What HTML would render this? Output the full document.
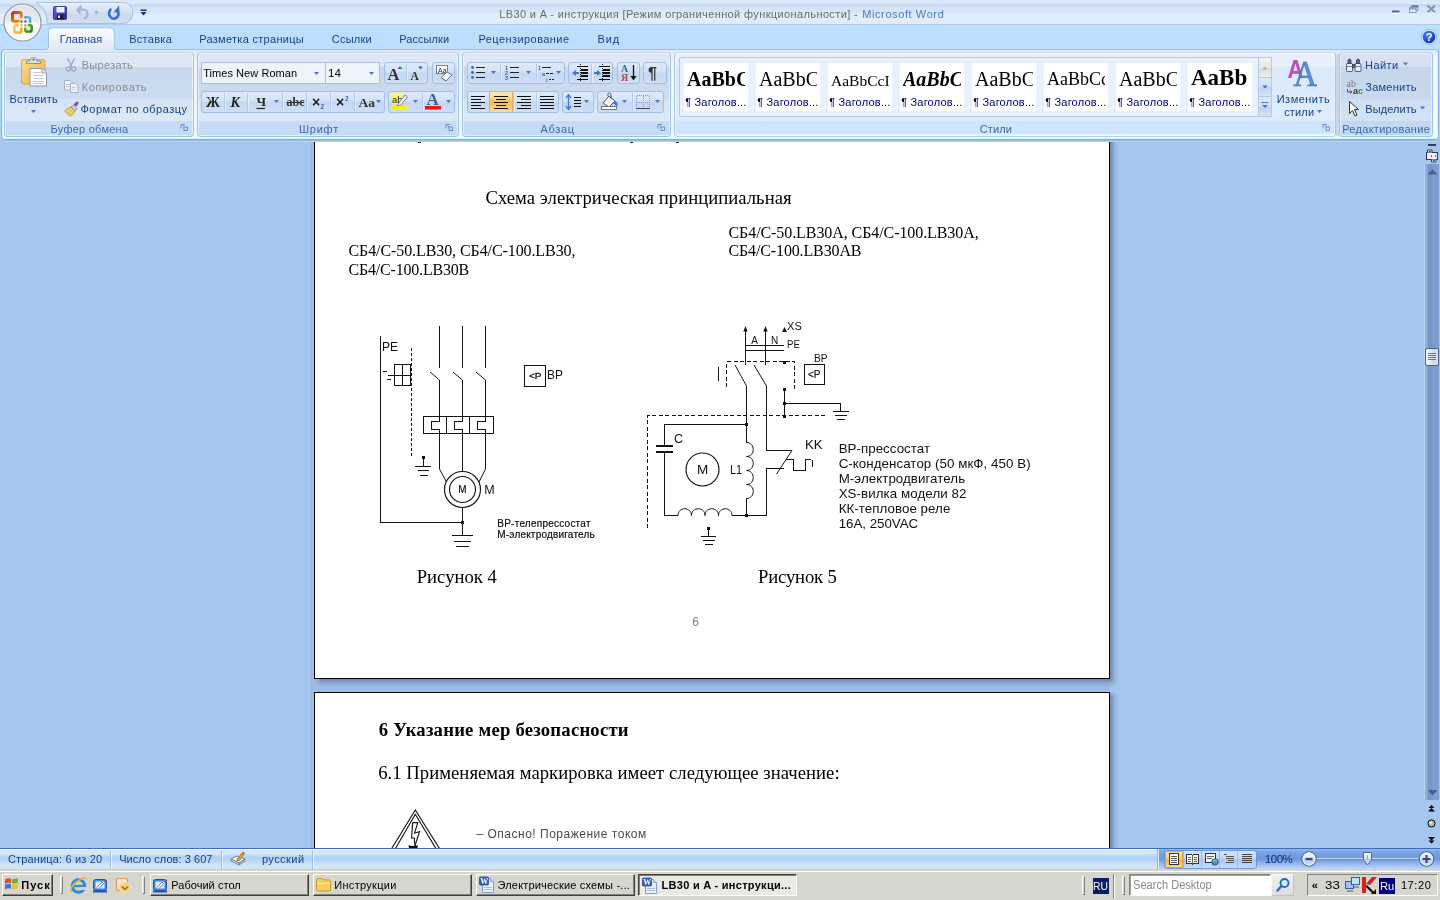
<!DOCTYPE html>
<html lang="ru"><head><meta charset="utf-8"><title>LB30 и A - инструкция - Microsoft Word</title>
<style>
html,body{margin:0;padding:0}
body{width:1440px;height:900px;overflow:hidden;position:relative;background:#a5c6ef;font-family:"Liberation Sans",sans-serif;font-size:11px;color:#000}
div,span,svg{position:absolute;box-sizing:border-box}
.t{white-space:pre;line-height:1}
svg{overflow:visible}
/* title + tabs */
#title{left:0;top:0;width:1440px;height:25px;background:linear-gradient(#dbe9fb 0,#dbe9fb 3px,#dfe4f8 3px,#dfe4f8 4px,#c9d9f2 4px,#cbdbf3 7px,#d3e2f8 7px,#d9e8fb 14px,#ddeefd 14px,#dfeefd 20px,#e3eafa 20px,#e3eafa 24px,#b2c9ee 24px,#b2c9ee 25px)}
#tabrow{left:0;top:25px;width:1440px;height:25px;background:#bddeff}
#tabsel{left:49px;top:28px;width:65px;height:23px;border:1px solid #8db2e3;border-bottom:none;border-radius:4px 4px 0 0;background:linear-gradient(#f3f8fe,#e1ecfa 60%,#dbe8f9)}
/* ribbon */
#ribbg{left:0;top:50px;width:1440px;height:92px;background:linear-gradient(#bddeff 0,#b4d0f6 86px,#a9c6f0 89px,#a9c6f0 92px)}
#ribbon{left:1px;top:49px;width:1438px;height:91px;border:1px solid #8cb0e8;border-top-color:#9cbfe4;border-bottom-color:#8fa8cc;border-radius:4px 4px 5px 5px;background:linear-gradient(#dde8f6 0,#e3eefa 4px,#ecf6fd 12px,#eef8fe 89px)}
#ribbon2{left:2px;top:53px;width:1436px;height:86px;border:1px solid #cdfcfc;border-top:none;border-radius:0 0 4px 4px}
#ribbon3{left:3px;top:53px;width:1434px;height:85px;border:1px solid #fbffff;border-top:none;border-radius:0 0 3px 3px}
#strip1{display:none}
#strip2{left:1px;top:140px;width:1438px;height:2px;background:linear-gradient(#a3bce0 0,#a3bce0 1px,#b5cdee 1px,#b5cdee 2px);border-radius:0 0 3px 3px}
.grp{top:52px;height:85px;border:1px solid;border-color:#c8d2e6 #a6c3e2 #9ac2e0 #a6c3e2;border-radius:4px;background:linear-gradient(#dfe8f6 0,#dce6f5 14px,#c8d9ed 14px,#ccdcf0 45px,#d4e3f5 47px,#dce9f8 68px,#c5dbf6 68px,#c5dbf6 83px);box-shadow:inset 0 0 0 1px rgba(255,255,255,.5)}
.bg{height:22px;border:1px solid #a3bfe3;border-radius:3px;background:linear-gradient(#dfeafa 0,#d3e2f6 9px,#c3d7f2 10px,#cfe0f6 21px)}
.bsep{top:1px;width:1px;height:18px;background:#b4cbea;box-shadow:1px 0 0 #e4eefb}
.inp{height:22px;border:1px solid #abc1de;background:#eef4fc}
/* doc */
.page{background:#fff;border:1px solid #000}
/* status */
#status{left:0;top:848px;width:1440px;height:22px;background:linear-gradient(#3e6db5 0,#3e6db5 1px,#fff 1px,#fff 2px,#d8e8fc 2px,#d6e7fc 5px,#c6dffb 7px,#afd2f7 9px,#b6d3f6 11px,#c3d9f5 14px,#d1e4f7 17px,#d4e7f8 21px,#b7d3f5 21px,#b7d3f5 22px)}
/* taskbar */
#taskbar{left:0;top:870px;width:1440px;height:30px;background:#d6d5ce;border-top:1px solid #d6d5ce;box-shadow:inset 0 1px 0 #fff}
.tb{top:874px;height:22px;background:#d6d5ce;border:1px solid;border-color:#fff #404040 #404040 #fff;box-shadow:inset -1px -1px 0 #808080}
.tbp{top:874px;height:22px;background:#ebe9e4;border:1px solid;border-color:#404040 #fff #fff #404040;box-shadow:inset 1px 1px 0 #808080}
.vs{width:2px;height:20px;top:875px;border-left:1px solid #808080;border-right:1px solid #fff}
.vh{width:3px;height:18px;top:876px;border:1px solid;border-color:#fff #808080 #808080 #fff}
#root{left:0;top:0;width:1440px;height:900px;will-change:transform}

</style></head>
<body>
<div id="root">
<div id="title"></div>
<div id="tabrow"></div>
<div id="ribbg"></div>
<div id="ribbon"></div>
<div id="ribbon2"></div>
<div id="ribbon3"></div>
<svg style="left:40px;top:25px" width="90" height="30" viewBox="40 25 90 30"><defs><linearGradient id="tg" x1="0" y1="0" x2="0" y2="1"><stop offset="0" stop-color="#fafcff"/><stop offset=".450" stop-color="#eef3fb"/><stop offset="1" stop-color="#e0e8f6"/></linearGradient></defs>
<path d="M45.500 50.500v-1q3 0 3-3.500V31.500q0-3.500 3.500-3.500H110.500q3.500 0 3.500 3.500V46q0 3.500 3 3.500v1z" fill="url(#tg)"/>
<path d="M45.500 49.500q3 0 3-3.500V31.500q0-3.500 3.500-3.500H110.500q3.500 0 3.500 3.500V46q0 3.500 3 3.500" fill="none" stroke="#9dbde9" stroke-width="1"/>
<path d="M49.500 46V32q0-3 3-3H110q3 0 3 3V46" fill="none" stroke="#ffffff" stroke-width="1" opacity=".850"/></svg>
<div id="strip1"></div>
<div id="strip2"></div>

<!-- quick access toolbar pill -->
<svg style="left:0;top:0" width="160" height="50" viewBox="0 0 160 50">
<defs>
<radialGradient id="ob" cx="50%" cy="72%" r="70%"><stop offset="0" stop-color="#ffffff"/><stop offset=".600" stop-color="#f6f7fa"/><stop offset=".850" stop-color="#e2e6ee"/><stop offset="1" stop-color="#cfd6e2"/></radialGradient>
<linearGradient id="qg" x1="0" y1="0" x2="0" y2="1"><stop offset="0" stop-color="#e3ecf8"/><stop offset=".450" stop-color="#d6e2f3"/><stop offset=".550" stop-color="#cbdaef"/><stop offset="1" stop-color="#d3e1f4"/></linearGradient>
<linearGradient id="lo" x1="0" y1="0" x2="1" y2="1"><stop offset="0" stop-color="#d42f0f"/><stop offset="1" stop-color="#f7a10c"/></linearGradient>
<linearGradient id="lb" x1="0" y1="1" x2="1" y2="0"><stop offset="0" stop-color="#1f6fd0"/><stop offset="1" stop-color="#58b4ec"/></linearGradient>
<linearGradient id="ly" x1="0" y1="0" x2="1" y2="1"><stop offset="0" stop-color="#fcd15a"/><stop offset="1" stop-color="#f6a40f"/></linearGradient>
<linearGradient id="lg" x1="0" y1="0" x2="1" y2="1"><stop offset="0" stop-color="#7cc22c"/><stop offset="1" stop-color="#2f7f17"/></linearGradient>
<linearGradient id="sv" x1="0" y1="0" x2="1" y2="1"><stop offset="0" stop-color="#6a5fe0"/><stop offset="1" stop-color="#2a2a90"/></linearGradient>
</defs>
<!-- curve where the pill wraps the office button -->

<path d="M36.500 2.500H122.500A10.500 10.500 0 0 1 122.500 23.500H47A24.400 24.400 0 0 0 36.500 2.500z" fill="url(#qg)" stroke="#a9bfdf" stroke-width="1"/>
<path d="M38.500 3.500H122.500A9.500 9.500 0 0 1 131.800 11" fill="none" stroke="#f3f8fd" stroke-width="1" opacity=".800"/>
<!-- office button -->
<circle cx="22.500" cy="22.500" r="18.500" fill="url(#ob)" stroke="#8f98a6" stroke-width="1.200"/>
<circle cx="22.500" cy="22.500" r="17.200" fill="none" stroke="#ffffff" stroke-width="1" opacity=".800"/>
<path d="M5.200 21.500a17.500 17.500 0 0 1 34.800 0q-17 3-34.800 0z" fill="#dfe4ec" opacity=".700"/>
<g fill="none" stroke-linejoin="round" stroke-linecap="round">
<path d="M21.300 17v-2.500q0-2-2-2h-4.800q-2 0-2 2v4.800q0 2 2 2h4" stroke="url(#lo)" stroke-width="2.900"/>
<path d="M25 17.200h3.800q1.400 0 1.400 1.400v3.200" stroke="url(#lb)" stroke-width="2.100"/>
<path d="M21.300 28.500v2q0 2-2 2h-3q-2 0-2-2v-3.200q0-2 2-2h1.500" stroke="url(#ly)" stroke-width="2.700"/>
<path d="M25.300 28.500v1.200q0 1.800 1.800 1.800h2.700q1.800 0 1.800-1.800v-2.700q0-1.800-1.800-1.800h-1" stroke="url(#lg)" stroke-width="2.700"/>
</g>
<path d="M21.500 20l1.400 1.500-1.400 1.500-1.400-1.500z" fill="#e4480f"/><path d="M25.300 20l1.400 1.500-1.400 1.500-1.400-1.500z" fill="#2277d6"/><path d="M21.500 23.800l1.400 1.500-1.400 1.500-1.400-1.500z" fill="#f6b014"/><path d="M25.300 23.800l1.400 1.500-1.400 1.500-1.400-1.500z" fill="#6ab825"/>
<!-- save -->
<rect x="53.500" y="6.500" width="13" height="13" rx="1" fill="url(#sv)" stroke="#2a2a80" stroke-width=".800"/>
<rect x="56.500" y="7" width="8" height="5.500" fill="#f4f4ff"/><rect x="57" y="14.500" width="6.500" height="4.500" fill="#1a1a3a"/><rect x="58" y="15.500" width="2" height="2.500" fill="#e8e8f8"/>
<!-- undo (disabled) -->
<path d="M77 10.500l3.500-3.500v2.500h3q4 .500 4 4.500t-4 4.500" fill="none" stroke="#a6b6d3" stroke-width="2.200"/><path d="M76 10.500l4.500-4.500v9z" fill="#a6b6d3"/>
<path d="M94 11h5l-2.500 3.500z" fill="#b3b3b3"/>
<!-- redo -->
<path d="M110.500 9.500q-3 4 0 7.500t7 0q2-3 0-6" fill="none" stroke="#3a70d0" stroke-width="2.600" stroke-linecap="round"/><path d="M113.500 12.500l6-.500-.500-6.500z" fill="#3a70d0"/>
<!-- customize -->
<path d="M140.500 9.500h6v1.500h-6zM140.500 12h6l-3 3.500z" fill="#15327a"/>
</svg>
<!-- window controls -->
<svg style="left:1380px;top:0" width="60" height="50" viewBox="1380 0 60 50">
<defs><radialGradient id="hp" cx="40%" cy="35%" r="70%"><stop offset="0" stop-color="#4f86ee"/><stop offset=".600" stop-color="#1c4fd0"/><stop offset="1" stop-color="#0b2f9a"/></radialGradient></defs>
<rect x="1392" y="12" width="7.500" height="2" fill="#fff"/><rect x="1392" y="10.500" width="7.500" height="2" fill="#5f6172"/>
<g fill="none" stroke="#8a9ec0" stroke-width="1"><rect x="1411.500" y="5.500" width="6.500" height="5"/><path d="M1411.500 6.500h6.500" stroke-width="2" stroke="#6f7f99"/><rect x="1409.500" y="7.500" width="6.500" height="5" fill="#e4edfa"/><path d="M1409.500 8.500h6.500" stroke-width="2"/></g>
<path d="M1427.500 5.500l7.500 7M1435 5.500l-7.500 7" stroke="#7d93b5" stroke-width="2" fill="none"/><path d="M1427 13.300h3M1432.500 13.300h3" stroke="#fff" stroke-width="1"/>
<circle cx="1429" cy="37" r="7" fill="url(#hp)" stroke="#eef4ff" stroke-width="1.300"/><circle cx="1429" cy="37" r="7.700" fill="none" stroke="#7da0d8" stroke-width=".700"/>
<text x="1425.800" y="41" font-family="Liberation Sans" font-weight="bold" font-size="11" fill="#fff">?</text>
</svg>

<!-- ribbon groups -->
<div class="grp" style="left:4px;width:190px"></div>
<div class="grp" style="left:197px;width:262px"></div>
<div class="grp" style="left:462px;width:209px"></div>
<div class="grp" style="left:674px;width:662px;border-color:#cfd8ea #a9c4e6 #b4d2ee #a9c4e6;background:linear-gradient(#e8eefb 0,#e6f0fc 14px,#dbeafb 14px,#deedfd 68px,#cfe5ff 68px,#cfe5ff 80px,#d9f0fe 81px,#ecf8ff 83px)"></div>
<div class="grp" style="left:1339px;width:94px;background:linear-gradient(#d7e3f4 0,#d4e0f2 14px,#c5d6eb 14px,#c8d9ee 45px,#cfdef2 47px,#d4e2f5 68px,#c1d8f3 68px,#c1d8f3 83px)"></div>
<div style="left:1336px;top:54px;width:3px;height:82px;background:#c8d7ec"></div>
<!-- font group controls -->
<div class="inp" style="left:201px;top:62px;width:125px"></div>
<div class="inp" style="left:325px;top:62px;width:55px"></div>
<div class="bg" style="left:384px;top:62px;width:44px"><div class="bsep" style="left:21px"></div></div>
<div class="bg" style="left:432px;top:62px;width:23px"></div>
<div class="bg" style="left:201px;top:91px;width:184px"><div class="bsep" style="left:22px"></div><div class="bsep" style="left:45px"></div><div class="bsep" style="left:80px"></div><div class="bsep" style="left:104px"></div><div class="bsep" style="left:128px"></div><div class="bsep" style="left:152px"></div></div>
<div class="bg" style="left:388px;top:91px;width:67px"><div class="bsep" style="left:33px"></div></div>
<!-- paragraph group controls -->
<div class="bg" style="left:467px;top:62px;width:98px"><div class="bsep" style="left:32px"></div><div class="bsep" style="left:68px"></div></div>
<div class="bg" style="left:568px;top:62px;width:45px"><div class="bsep" style="left:22px"></div></div>
<div class="bg" style="left:617px;top:62px;width:23px"></div>
<div class="bg" style="left:643px;top:62px;width:24px"></div>
<div class="bg" style="left:467px;top:91px;width:92px"><div class="bsep" style="left:45px"></div><div class="bsep" style="left:68px"></div></div>
<div style="left:489px;top:92px;width:24px;height:20px;background:linear-gradient(#fde9bb 0,#fbd07c 8px,#f9bc50 9px,#fcd88f 19px);border-left:1px solid #dcae68;border-right:1px solid #dcae68"></div>
<div class="bg" style="left:562px;top:91px;width:32px"></div>
<div class="bg" style="left:597px;top:91px;width:67px"><div class="bsep" style="left:34px"></div></div>
<!-- styles gallery -->
<div style="left:679px;top:57px;width:593px;height:60px;border:1px solid #b3cbea;border-radius:2px;background:#e9f1fc"></div>

<!-- style tiles -->
<div style="left:684px;top:63px;width:64px;height:48px;background:#fff;overflow:hidden"><span class="t" style="left:3px;max-width:58px;overflow:hidden;top:5.75px;font-family:'Liberation Serif',serif;font-size:20px;font-weight:bold">AaBbC</span></div>
<div style="left:756px;top:63px;width:64px;height:48px;background:#fff;overflow:hidden"><span class="t" style="left:3px;max-width:58px;overflow:hidden;top:5.75px;font-family:'Liberation Serif',serif;font-size:20px;font-weight:normal">AaBbC</span></div>
<div style="left:828px;top:63px;width:64px;height:48px;background:#fff;overflow:hidden"><span class="t" style="left:3px;max-width:58px;overflow:hidden;top:9.52px;font-family:'Liberation Serif',serif;font-size:15.5px;font-weight:normal">AaBbCcI</span></div>
<div style="left:900px;top:63px;width:64px;height:48px;background:#fff;overflow:hidden"><span class="t" style="left:3px;max-width:58px;overflow:hidden;top:5.75px;font-family:'Liberation Serif',serif;font-size:20px;font-weight:bold;font-style:italic">AaBbC</span></div>
<div style="left:972px;top:63px;width:64px;height:48px;background:#fff;overflow:hidden"><span class="t" style="left:3px;max-width:58px;overflow:hidden;top:5.75px;font-family:'Liberation Serif',serif;font-size:20px;font-weight:normal">AaBbC</span></div>
<div style="left:1044px;top:63px;width:64px;height:48px;background:#fff;overflow:hidden"><span class="t" style="left:3px;max-width:58px;overflow:hidden;top:7.42px;font-family:'Liberation Serif',serif;font-size:18px;font-weight:normal">AaBbCc</span></div>
<div style="left:1116px;top:63px;width:64px;height:48px;background:#fff;overflow:hidden"><span class="t" style="left:3px;max-width:58px;overflow:hidden;top:5.75px;font-family:'Liberation Serif',serif;font-size:20px;font-weight:normal">AaBbC</span></div>
<div style="left:1188px;top:63px;width:64px;height:48px;background:#fff;overflow:hidden"><span class="t" style="left:3px;max-width:58px;overflow:hidden;top:3.24px;font-family:'Liberation Serif',serif;font-size:23px;font-weight:bold">AaBb</span></div>

<!-- gallery scroll buttons -->
<div style="left:1258px;top:57px;width:14px;height:21px;border:1px solid #b3cbea;background:linear-gradient(#f4f4f2,#e7e7e4 50%,#dededb 52%,#ececea)"></div>
<div style="left:1258px;top:77px;width:14px;height:20px;border:1px solid #b3cbea;background:linear-gradient(#dce9fa,#cfe0f7 50%,#bcd3f2 52%,#d3e3f8)"></div>
<div style="left:1258px;top:96px;width:14px;height:21px;border:1px solid #b3cbea;background:linear-gradient(#dce9fa,#cfe0f7 50%,#bcd3f2 52%,#d3e3f8)"></div>
<svg style="left:0;top:0" width="1440" height="142" viewBox="0 0 1440 142">
<defs>
<linearGradient id="pg" x1="0" y1="0" x2="1" y2="1"><stop offset="0" stop-color="#fbdc8e"/><stop offset="1" stop-color="#eeb24b"/></linearGradient>
</defs>
<!-- dialog launchers -->
<g transform="translate(181 124)"><path d="M0 .500h4M0 .500v4M3 3h3.500v3.500H3zM3.500 3.500L1.500 1.500" stroke="#6f8fc0" stroke-width="1" fill="none"/></g><g transform="translate(446 124)"><path d="M0 .500h4M0 .500v4M3 3h3.500v3.500H3zM3.500 3.500L1.500 1.500" stroke="#6f8fc0" stroke-width="1" fill="none"/></g><g transform="translate(658 124)"><path d="M0 .500h4M0 .500v4M3 3h3.500v3.500H3zM3.500 3.500L1.500 1.500" stroke="#6f8fc0" stroke-width="1" fill="none"/></g><g transform="translate(1323 124)"><path d="M0 .500h4M0 .500v4M3 3h3.500v3.500H3zM3.500 3.500L1.500 1.500" stroke="#6f8fc0" stroke-width="1" fill="none"/></g>
<!-- paste -->
<g>
<rect x="21.500" y="59.500" width="23.500" height="24.500" rx="2" fill="url(#pg)" stroke="#dba84a"/>
<path d="M26.500 63.500v-2.500h3.500q.500-3.500 3.500-3.500t3.500 3.500h3.500v2.500z" fill="#dde1e7" stroke="#7f8896" stroke-width=".900"/>
<circle cx="33.500" cy="59.800" r="1" fill="#9a6a2a"/>
<path d="M30 68.500h12l4.500 4.500v13h-16.500z" fill="#fff" stroke="#8a97ad"/>
<path d="M42 68.500v4.500h4.500" fill="#e3e9f2" stroke="#8a97ad" stroke-width=".900"/>
<path d="M32.500 72.500h8M32.500 75.500h11.500M32.500 78.500h11.500M32.500 81.500h11.500M32.500 83.500h11.500" stroke="#c3cbd8" shape-rendering="crispEdges"/>
</g>
<g transform="translate(31 110)"><path d="M0 0h5L2.500 3z" fill="#5076b5"/></g>
<!-- cut (disabled) -->
<g stroke="#9aa7c2" fill="none" stroke-width="1.400"><path d="M67.500 58.500l4.500 8.500M74.500 58.500l-4.500 8.500"/><circle cx="68.200" cy="69" r="2.100"/><circle cx="73.800" cy="69" r="2.100"/></g>
<!-- copy (disabled) -->
<g stroke="#a9b3c8" fill="#f1f3f8"><path d="M64.500 80.500h5.500l2.500 2.500v7h-8z"/><path d="M70.500 83.500h5l2.500 2.500v6.500h-7.500z"/><path d="M66 84.500h4M66 86.500h4M72 87.500h4M72 89.500h4" stroke="#c5ccda"/></g>
<!-- format painter -->
<g transform="translate(71.500 109.500) scale(.860) translate(-71.500 -108.500)"><path d="M63.500 110.500q3-4.500 8-5l4 4.500q-1 4-5.500 6.500z" fill="#ead56d" stroke="#a8922e" stroke-width=".800"/><path d="M66.500 110.500l3.500 4M69 108l3.500 4" stroke="#b9a23a" stroke-width=".600"/><path d="M71 105.500l3-2.500 4 4.500-2.500 3z" fill="#cdd1da" stroke="#666b78" stroke-width=".700"/><path d="M74.500 102.500l3-2.700q1.500-.500 2 1l-2.500 3.700z" fill="#6a5fd0" stroke="#3a3590" stroke-width=".700"/></g>
<!-- font dropdown arrows -->
<g transform="translate(314 72)"><path d="M0 0h5L2.500 3z" fill="#5076b5"/></g><g transform="translate(369 72)"><path d="M0 0h5L2.500 3z" fill="#5076b5"/></g>
<!-- grow/shrink font -->
<text x="387.500" y="79.500" font-family="Liberation Serif" font-weight="bold" font-size="16.500" fill="#333">A</text>
<path d="M397.500 69l2.500-3 2.500 3z" fill="#3f66b0"/>
<text x="410.500" y="79.500" font-family="Liberation Serif" font-weight="bold" font-size="11.500" fill="#333">A</text>
<path d="M418 66.500h5l-2.500 3z" fill="#3f66b0"/>
<!-- clear formatting -->
<g><rect x="436.500" y="65.500" width="11" height="8" fill="#fff" stroke="#6f7f9f"/><text x="438" y="72.500" font-family="Liberation Sans" font-size="7" fill="#222">Aa</text><path d="M441 77.500l6-5.500 5 3-6 6z" fill="#f6f6fb" stroke="#5f6a8a" stroke-width=".900"/><path d="M441 77.500l5 3.500" stroke="#5f6a8a" stroke-width=".800"/></g>
<!-- B I U etc -->
<text x="206" y="107" font-family="Liberation Serif" font-weight="bold" font-size="14" fill="#222">Ж</text>
<text x="230.500" y="107" font-family="Liberation Serif" font-weight="bold" font-style="italic" font-size="14" fill="#222">К</text>
<text x="256.500" y="106" font-family="Liberation Serif" font-weight="bold" font-size="13" fill="#222">Ч</text><path d="M256.500 108.500h8.500" stroke="#222" stroke-width="1.200"/>
<g transform="translate(274 100)"><path d="M0 0h5L2.500 3z" fill="#5076b5"/></g>
<text x="286.500" y="106" font-family="Liberation Serif" font-weight="bold" font-size="12" fill="#333">abc</text><path d="M286.500 102.500h17.500" stroke="#333" stroke-width="1"/>
<text x="312" y="107" font-family="Liberation Sans" font-weight="bold" font-size="14" fill="#222">×</text><text x="320.500" y="109" font-family="Liberation Sans" font-weight="bold" font-size="6.500" fill="#3f66b0">2</text>
<text x="336" y="107" font-family="Liberation Sans" font-weight="bold" font-size="14" fill="#222">×</text><text x="345" y="101" font-family="Liberation Sans" font-weight="bold" font-size="6.500" fill="#3f66b0">2</text>
<text x="358.500" y="107" font-family="Liberation Serif" font-weight="bold" font-size="13.500" fill="#333">Aa</text>
<g transform="translate(376 100)"><path d="M0 0h5L2.500 3z" fill="#5076b5"/></g>
<!-- highlight -->
<rect x="392" y="94" width="9" height="10" fill="#fff36a"/><text x="392" y="102.500" font-family="Liberation Sans" font-size="9.500" fill="#222">ab</text>
<path d="M398 104l7-9 2.500 2-7 8.500-3 .500z" fill="#e9edf6" stroke="#5f6a8a" stroke-width=".800"/>
<rect x="392" y="106" width="16" height="3.500" fill="#ffee00"/>
<g transform="translate(413 100)"><path d="M0 0h5L2.500 3z" fill="#5076b5"/></g>
<!-- font color -->
<text x="426.500" y="105" font-family="Liberation Serif" font-weight="bold" font-size="17" fill="#3c5ea8">A</text>
<rect x="425" y="106" width="16" height="3.500" fill="#ee1111"/>
<g transform="translate(446 100)"><path d="M0 0h5L2.500 3z" fill="#5076b5"/></g>
<!-- bullets -->
<g shape-rendering="crispEdges" stroke="#222" stroke-width="1.500"><path d="M476 67.500h9M476 72.500h9M476 77.500h9"/></g>
<g fill="#3f66b0"><circle cx="472.500" cy="67.500" r="1.400"/><circle cx="472.500" cy="72.500" r="1.400"/><circle cx="472.500" cy="77.500" r="1.400"/></g>
<g transform="translate(491 71)"><path d="M0 0h5L2.500 3z" fill="#5076b5"/></g>
<!-- numbering -->
<g shape-rendering="crispEdges" stroke="#222" stroke-width="1.500"><path d="M510 67.500h9M510 72.500h9M510 77.500h9"/></g>
<g font-family="Liberation Sans" font-weight="bold" font-size="5.500" fill="#3f66b0"><text x="505" y="69.500">1</text><text x="505" y="74.500">2</text><text x="505" y="79.500">3</text></g>
<g transform="translate(526 71)"><path d="M0 0h5L2.500 3z" fill="#5076b5"/></g>
<!-- multilevel -->
<g shape-rendering="crispEdges" stroke="#222" stroke-width="1.500"><path d="M542 67.500h9M546 73.500h3M550 73.500h3M549 79.500h2M552 79.500h2"/></g>
<g font-family="Liberation Sans" font-weight="bold" font-size="5.500" fill="#3f66b0"><text x="538" y="69.500">1</text><text x="542" y="75.500">a</text><text x="546" y="81.500">i</text></g>
<g transform="translate(556 71)"><path d="M0 0h5L2.500 3z" fill="#5076b5"/></g>
<!-- indents -->
<g shape-rendering="crispEdges" stroke="#111" stroke-width="1.500"><path d="M577 66.500h11M581 70h7M581 73h7M581 76h7M577 79.500h11" stroke-width="1.800"/><path d="M580.500 64v17" stroke-width="1" stroke-dasharray="1 1"/></g>
<path d="M572 73l4-3v2h3v2h-3v2z" fill="#3f78d0"/>
<g shape-rendering="crispEdges" stroke="#111" stroke-width="1.500"><path d="M599 66.500h11M603 70h7M603 73h7M603 76h7M599 79.500h11" stroke-width="1.800"/><path d="M602.500 64v17" stroke-width="1" stroke-dasharray="1 1"/></g>
<path d="M601 73l-4-3v2h-3v2h3v2z" fill="#3f78d0"/>
<!-- sort -->
<text x="621" y="72" font-family="Liberation Serif" font-weight="bold" font-size="10" fill="#3c5ea8">A</text>
<text x="621" y="81" font-family="Liberation Serif" font-weight="bold" font-size="10" fill="#a84a4a">Я</text>
<path d="M633.500 65v13" stroke="#111" stroke-width="1.300"/><path d="M630.500 76h6l-3 4.500z" fill="#111"/>
<!-- pilcrow -->
<text x="648" y="79" font-family="Liberation Sans" font-weight="bold" font-size="16" fill="#333">¶</text>
<!-- alignment -->
<g shape-rendering="crispEdges" stroke="#111" stroke-width="1.500">
<path d="M471 96.500h14M471 99.500h10M471 102.500h14M471 105.500h10M471 108.500h14"/>
<path d="M494 96.500h14M496 99.500h10M494 102.500h14M496 105.500h10M494 108.500h14"/>
<path d="M517 96.500h14M521 99.500h10M517 102.500h14M521 105.500h10M517 108.500h14"/>
<path d="M540 96.500h14M540 99.500h14M540 102.500h14M540 105.500h14M540 108.500h14"/>
<path d="M574 97.500h7M574 100.500h7M574 103.500h7M574 106.500h7"/>
</g>
<path d="M568.500 95v14M566 98l2.500-3.500L571 98M566 106l2.500 3.500L571 106" stroke="#3f78d0" stroke-width="1.300" fill="none"/>
<g transform="translate(584 100)"><path d="M0 0h5L2.500 3z" fill="#5076b5"/></g>
<!-- fill -->
<g><path d="M603 103l6-7 6 5-6 6z" fill="#f4f6fb" stroke="#4a5578" stroke-width="1"/><path d="M608 96c-1-4 3-4 3-1v4" fill="none" stroke="#4a5578" stroke-width="1"/><path d="M615 101c3 1 3 4 2 6-1-2-3-3-4-4z" fill="#3f78d0"/><rect x="601.500" y="106.500" width="15" height="3" fill="#fff" stroke="#777"/></g>
<g transform="translate(622 100)"><path d="M0 0h5L2.500 3z" fill="#5076b5"/></g>
<!-- borders -->
<g shape-rendering="crispEdges" stroke="#8aa0c5" stroke-width="1" stroke-dasharray="1 1" fill="none"><path d="M636.500 95.500h13M636.500 102.500h13M636.500 95.500v13M643.500 95.500v13M649.500 95.500v13"/></g>
<path d="M636 108.500h14" stroke="#444" stroke-width="1" shape-rendering="crispEdges"/>
<g transform="translate(655 100)"><path d="M0 0h5L2.500 3z" fill="#5076b5"/></g>
<!-- gallery scroll arrows -->
<path d="M1262 69.500l3-3 3 3z" fill="#b8b8b4"/>
<path d="M1262 85.500h6l-3 3z" fill="#4f79b8"/>
<path d="M1261.500 102.500h7" stroke="#4f79b8" stroke-width="1"/><path d="M1262 105h6l-3 3z" fill="#4f79b8"/>
<!-- change styles -->
<text x="1287.500" y="77.500" font-family="Liberation Sans" font-size="25" font-weight="bold" fill="#c04cb8" textLength="16" lengthAdjust="spacingAndGlyphs">A</text>
<text x="1293.500" y="85.500" font-family="Liberation Serif" font-size="35" fill="#5a8fdc" stroke="#3565b4" stroke-width=".500" textLength="23.500" lengthAdjust="spacingAndGlyphs">A</text>
<g transform="translate(1317 110)"><path d="M0 0h5L2.500 3z" fill="#5076b5"/></g>
<!-- find -->
<g stroke="#2f3b63" stroke-width=".800"><rect x="1346.500" y="63.500" width="6" height="8" rx="1" fill="#e9eefa"/><rect x="1355" y="63.500" width="6" height="8" rx="1" fill="#e9eefa"/><path d="M1348 63.500v-3.500q1.500-2 3 0v3.500zM1356.500 63.500v-3.500q1.500-2 3 0v3.500z" fill="#5a6a9a"/><rect x="1352.500" y="64.500" width="2.500" height="3" fill="#5a6a9a"/><path d="M1346.500 66.500h6M1355 66.500h6" stroke="#5a6a9a"/></g>
<g transform="translate(1403 62.500)"><path d="M0 0h5L2.500 3z" fill="#5076b5"/></g>
<!-- replace -->
<text x="1346.500" y="87" font-family="Liberation Serif" font-size="10" fill="#777">ab</text>
<text x="1353" y="94" font-family="Liberation Sans" font-weight="bold" font-size="9" fill="#333">a</text><text x="1358" y="94" font-family="Liberation Sans" font-weight="bold" font-size="9" fill="#2a9a2a">c</text>
<path d="M1347.500 89v3h4M1350 90.500l2 1.500-2 1.500" stroke="#555" stroke-width="1" fill="none"/>
<!-- select -->
<path d="M1349.500 101.500v12l3-3 2.500 5.500 2-1-2.500-5.500h4z" fill="#fff" stroke="#333" stroke-width="1"/>
<g transform="translate(1420 106.500)"><path d="M0 0h5L2.500 3z" fill="#5076b5"/></g>
</svg>

<!-- page shadows -->
<div style="left:310px;top:142px;width:5px;height:550px;background:#9cbbe6"></div>
<div style="left:1110px;top:142px;width:9px;height:537px;background:linear-gradient(90deg,#6f88ab 0,#7f9bc1 22%,#90aed6 45%,#9dbce4 68%,#a3c2ea 85%,#a5c6ef 100%)"></div>
<div style="left:314px;top:679px;width:796px;height:13px;background:#9cbbe6"></div>
<div style="left:322px;top:679px;width:788px;height:9px;background:linear-gradient(#6f88ab 0,#7c98be 22%,#8aa8d0 45%,#95b3dd 68%,#9cbbe6 100%)"></div>
<div style="left:314px;top:679px;width:8px;height:9px;background:radial-gradient(ellipse 8px 9px at 100% 0,#6f88ab 0,#7c98be 22%,#8aa8d0 45%,#95b3dd 68%,#9cbbe6 100%)"></div>
<div style="left:1110px;top:679px;width:9px;height:10px;background:radial-gradient(ellipse 9px 10px at 0 0,#6f88ab 0,#7f9bc1 22%,#90aed6 45%,#9dbce4 68%,#a3c2ea 85%,#a5c6ef 100%)"></div>
<div style="left:310px;top:692px;width:5px;height:156px;background:#9cbbe6"></div>
<div style="left:1110px;top:698px;width:9px;height:150px;background:linear-gradient(90deg,#6f88ab 0,#7f9bc1 22%,#90aed6 45%,#9dbce4 68%,#a3c2ea 85%,#a5c6ef 100%)"></div>
<div style="left:1110px;top:689px;width:9px;height:9px;background:radial-gradient(ellipse 9px 9px at 0 100%,#6f88ab 0,#7f9bc1 22%,#90aed6 45%,#9dbce4 68%,#a3c2ea 85%,#a5c6ef 100%)"></div>
<div class="page" style="left:314px;top:142px;width:796px;height:537px;border-top:none"></div>
<div class="page" style="left:314px;top:692px;width:796px;height:170px"></div>
<!-- frag: clipped glyph bottoms at page top -->
<div style="left:418px;top:142px;width:3px;height:1px;background:#222;box-shadow:212px 0 0 #222,258px 0 0 #222"></div>

<!-- schematic: figure 4 -->
<svg style="left:0;top:0" width="1440" height="860" viewBox="0 0 1440 860" fill="none" stroke="#151510" stroke-width="1">
<g shape-rendering="crispEdges">
<path d="M380.500 336V522.500H462"/>
<path d="M411.500 348V456" stroke-dasharray="3 2"/>
<rect x="394.500" y="364.500" width="16" height="21"/>
<path d="M402.500 364V385M388 375.500H411M383 371.500h4M387 379.500h4"/>
<path d="M439.500 326V368M462.500 326V368M485.500 326V368"/>
<path d="M439.500 380V421.500H431.500V429.500H439.500V469"/>
<path d="M462.500 380V421.500H454.500V429.500H462.500V471"/>
<path d="M485.500 380V421.500H477.500V429.500H485.500V469"/>
<rect x="423.500" y="416.500" width="70" height="17"/>
<path d="M446.500 416V433M469.500 416V433"/>
<path d="M423.500 457V466M415 466.500h16M418 470.500h11M420 475.500h8"/>
<rect x="422" y="456" width="3" height="3" fill="#151510" stroke="none"/>
<path d="M462.500 508V535M452 535.500h21M454 541.500h17M456 546.500h13"/>
<rect x="461" y="521" width="3" height="3" fill="#151510" stroke="none"/>
<rect x="524.500" y="365.500" width="21" height="21"/>
</g>
<path d="M430 372l9.500 8M453 372l9.500 8M476 372l9.500 8"/>
<path d="M439.500 469l7 13M485.500 469l-6.500 13"/>
<circle cx="462.500" cy="489.500" r="18" stroke-width="1.150"/><circle cx="462.500" cy="489.500" r="13" stroke-width="1.150"/>
</svg>
<!-- schematic: figure 5 -->
<svg style="left:0;top:0" width="1440" height="860" viewBox="0 0 1440 860" fill="none" stroke="#151510" stroke-width="1">
<g shape-rendering="crispEdges">
<path d="M745.500 328V365M765.500 328V365"/>
<path d="M745 345.500H784M745 350.500H784"/>
<path d="M726.500 387V361.500H794.500V389" stroke-dasharray="4 2.500"/>
<rect x="783" y="361" width="3" height="3" fill="#151510" stroke="none"/>
<path d="M718.500 367V381"/>
<path d="M746.500 386V443M766.500 386V450.500H792"/>
<path d="M784.500 389V417M784 403.500H840.500V411M833 411.500h16M835 415.500h12M837 419.500h8"/>
<rect x="783" y="388" width="3" height="3" fill="#151510" stroke="none"/><rect x="783" y="402" width="3" height="3" fill="#151510" stroke="none"/><rect x="783" y="415" width="3" height="3" fill="#151510" stroke="none"/>
<path d="M825 415.500H647.500V528" stroke-dasharray="4 2.500"/>
<path d="M746 424.500H664.500V445M664.500 453V515.500H678M732 515.500H766.500V468.500H784"/>
<rect x="745" y="423" width="3" height="3" fill="#151510" stroke="none"/><rect x="745" y="514" width="3" height="3" fill="#151510" stroke="none"/>
<path d="M656 446H673M656 452H673" stroke-width="2"/>
<path d="M746.500 498V515"/>
<path d="M786 459.500H793.500V470.500H805.500V459.500H811M812.500 460V467"/>
<path d="M708.500 528V536M701 536.500h15M703 540.500h12M705 544.500h8"/>
<rect x="707" y="527" width="3" height="3" fill="#151510" stroke="none"/>
<rect x="804.500" y="364.500" width="20" height="20"/>
</g>
<path d="M745.500 326l-2.200 5.500h4.400zM765.500 326l-2.200 5.500h4.400zM784.500 327l-2.500 5h5z" fill="#151510" stroke="none"/>
<path d="M735 365l11.500 21M754 365l12.500 21"/>
<path d="M746.500 442.500c9 0 9 14 0 14c9 0 9 14 0 14c9 0 9 14 0 14c9 0 9 14 0 14"/>
<path d="M678 515.500c0-9 13.500-9 13.500 0c0-9 13.500-9 13.500 0c0-9 13.500-9 13.500 0c0-9 13.500-9 13.500 0"/>
<path d="M792 450.500L776.500 474"/>
<circle cx="702.500" cy="469.500" r="16.500" stroke-width="1.150"/>
</svg>
<!-- warning sign on page 2 -->
<svg style="left:380px;top:800px" width="80" height="48" viewBox="380 800 80 48" fill="none" stroke="#111" stroke-width="1.150">
<path d="M391.400 849L415.300 810L439.800 849"/><path d="M395.200 849L415.300 814.300L436.200 849"/>
<path d="M412.600 822.600h5.200l-3.300 10.600l5-1.600l-4.600 14.400" stroke-width="1.100"/><path d="M412.600 822.600l-1 15.400h2.600l.900 8" stroke-width="1.100"/>
<path d="M408.300 845.300q5 1.400 9.800 0l-.800 3h-8.200z" fill="#111" stroke="none"/>
</svg>

<!-- vertical scrollbar -->
<div style="left:1424px;top:164px;width:1px;height:636px;background:#b9d3f5"></div>
<div style="left:1425px;top:164px;width:14px;height:636px;background:linear-gradient(90deg,#8fb0d8 0,#8fb0d8 2px,#7797cb 3px,#7595ca 7px,#7e9fcd 8px,#7e9fcd 14px)"></div>
<div style="left:1428px;top:144px;width:8px;height:2px;background:#3b3f5c"></div>
<svg style="left:1424px;top:148px" width="16" height="16" viewBox="1424 148 16 16"><rect x="1426.500" y="152.500" width="11" height="7" fill="#f6eaf4" stroke="#2a3a5a"/><path d="M1427.500 152.500v-2.500h4.500v2.500" fill="#fbf6fb" stroke="#2a3a5a"/><path d="M1428.500 151l1.300 1.800 1.300-1.800z" fill="#2a3a5a"/><path d="M1431.500 159.500v2.500h4.500v-2.500" fill="#fbf6fb" stroke="#2a3a5a"/><path d="M1432.500 161l1.300-1.800 1.300 1.800z" fill="#2a3a5a"/><path d="M1431.500 155v2M1435.500 155v2" stroke="#6a7390" stroke-width="1"/></svg>
<svg style="left:1425px;top:164px" width="14" height="14" viewBox="0 0 14 14"><path d="M2.5 10.5L7.5 5l5 5.5z" fill="#4d5f8c"/></svg>
<svg style="left:1425px;top:786px" width="14" height="14" viewBox="0 0 14 14"><path d="M2.5 4L7.5 9.5 12.5 4z" fill="#4d5f8c"/></svg>
<div style="left:1425px;top:348px;width:14px;height:18px;border:1px solid #4a5f96;border-radius:2px;background:linear-gradient(90deg,#f4f6fa 0,#e2e7f0 6px,#cfd7e5 7px,#dfe5ee 12px)"></div>
<div style="left:1428px;top:353px;width:8px;height:1px;background:#6e7787;box-shadow:0 2px 0 #6e7787,0 4px 0 #6e7787,0 6px 0 #6e7787"></div>
<svg style="left:1427px;top:803px" width="10" height="42" viewBox="0 0 10 42"><path d="M4.5 2L1.5 5h6zM4.5 5L1 8.5h7z" fill="#000"/><circle cx="4.5" cy="20.5" r="3.6" fill="#b8b8b8" stroke="#000" stroke-width="1"/><circle cx="3.6" cy="19.6" r="1.4" fill="#f4f4f4"/><path d="M1 34h7L4.5 37.5zM1.5 37.5h6L4.5 40.5z" fill="#000"/></svg>

<!-- status bar -->
<div id="status"></div>
<div style="left:110px;top:851px;width:1px;height:18px;background:#9dbbe6;box-shadow:1px 0 0 #eaf3fe"></div>
<div style="left:221px;top:851px;width:1px;height:18px;background:#9dbbe6;box-shadow:1px 0 0 #eaf3fe"></div>
<div style="left:312px;top:851px;width:1px;height:18px;background:#9dbbe6;box-shadow:1px 0 0 #eaf3fe"></div>
<div style="left:1158px;top:849px;width:282px;height:21px;background:linear-gradient(#9dbdee 0,#7fa7e6 2px,#6f9be0 8px,#6c98de 10px,#8fb3ea 14px,#aecbf4 18px,#c4daf8 21px);border-left:1px solid #e3eefc"></div>
<div style="left:1157px;top:849px;width:1px;height:21px;background:#8aaee0"></div>
<!-- proofing icon -->
<svg style="left:229px;top:851px" width="18" height="16" viewBox="0 0 18 16"><path d="M2 8l6-3 8 3-6 4z" fill="#fdfdfd" stroke="#6d7f9d" stroke-width="1"/><path d="M2 8v2l8 4v-2z" fill="#c9d3e4" stroke="#6d7f9d" stroke-width=".8"/><path d="M10 12v2l6-4V8z" fill="#a9b7cf" stroke="#6d7f9d" stroke-width=".8"/><path d="M8 8l5-6 2 1-4 6-3 1z" fill="#e9a23b" stroke="#8a5a1a" stroke-width=".7"/><path d="M13 2l1.2-1.3 1.8 1L15 3z" fill="#d9534a"/></svg>
<!-- view buttons -->
<div style="left:1164px;top:850px;width:93px;height:19px;border:1px solid #6e97d6;border-radius:3px;background:linear-gradient(#d3e3fa,#c2d8f6 45%,#a9c6ef 50%,#c6dbf8)"></div>
<div style="left:1183px;top:851px;width:1px;height:17px;background:#9dbbe8;box-shadow:18px 0 0 #9dbbe8,36px 0 0 #9dbbe8,54px 0 0 #9dbbe8"></div>
<div style="left:1165px;top:851px;width:18px;height:17px;border:1px solid #e8a43c;border-radius:2px;background:linear-gradient(#fde3a5,#fbc45e 50%,#f9b13c 55%,#fdd88a)"></div>
<svg style="left:1164px;top:849px" width="94" height="20" viewBox="0 0 94 20">
<g stroke="#333" stroke-width="1" fill="#fff" shape-rendering="crispEdges">
<rect x="5.5" y="4.5" width="9" height="11"/><path d="M7 7.5h6M7 9.5h6M7 11.5h6M7 13.5h6" stroke="#555"/>
<path d="M22.5 5.5h5l1 1 1-1h5v9h-5l-1 1-1-1h-5z" fill="#f4f4ea"/><path d="M28.5 6.5v8M24 8.5h3M24 10.5h3M24 12.5h3M30 8.5h3M30 10.5h3M30 12.5h3" stroke="#666"/>
<rect x="41.500" y="4.500" width="10" height="9" fill="#f8f8f8"/><path d="M43 7.500h7M43 9.500h5" stroke="#666"/>
<path d="M60 5.500h3M62 7.500h8M62 9.500h8M64 11.500h6M62 13.500h8" stroke="#555" fill="none"/>
<path d="M78 5.500h10M78 7.500h10M78 9.500h10M78 11.500h10M78 13.500h10" stroke="#444" fill="none"/>
</g><circle cx="51" cy="13" r="3.300" fill="#3f8fd6" stroke="#1e5a99" stroke-width=".8"/><path d="M49 12.500q2-2 4 0" stroke="#7fd36a" stroke-width="1.300" fill="none"/></svg>
<!-- zoom slider -->
<div style="left:1316px;top:858px;width:102px;height:1px;background:#c9dcf7;box-shadow:0 1px 0 #6a8fcd"></div>
<svg style="left:1300px;top:849px" width="140" height="20" viewBox="1300 849 140 20">
<defs><linearGradient id="zb" x1="0" y1="0" x2="0" y2="1"><stop offset="0" stop-color="#f6f9fe"/><stop offset=".500" stop-color="#d4e2f7"/><stop offset=".550" stop-color="#b4cbee"/><stop offset="1" stop-color="#dbe8fa"/></linearGradient></defs>
<circle cx="1309" cy="859" r="7.300" fill="url(#zb)" stroke="#4f6c9c" stroke-width="1.100"/><circle cx="1309" cy="859" r="6" fill="none" stroke="#fff" stroke-width=".800" opacity=".700"/><path d="M1305.500 859h7" stroke="#3b4b6a" stroke-width="2.200"/>
<circle cx="1426.500" cy="859" r="7.300" fill="url(#zb)" stroke="#4f6c9c" stroke-width="1.100"/><circle cx="1426.500" cy="859" r="6" fill="none" stroke="#fff" stroke-width=".800" opacity=".700"/><path d="M1422.500 859h8M1426.500 855v8" stroke="#3b4b6a" stroke-width="2.200"/>
<path d="M1363.500 852.500h8v7.500l-4 5-4-5z" fill="url(#zb)" stroke="#4f6c9c" stroke-width="1"/><path d="M1367.500 855v4" stroke="#8fa7cf" stroke-width="1"/>
</svg>

<!-- taskbar -->
<div id="taskbar"></div>
<div class="tb" style="left:2px;width:51px"></div>
<div class="vh" style="left:60px"></div>
<div class="vh" style="left:142px"></div>
<div class="tb" style="left:150px;width:159px"></div>
<div class="tb" style="left:313px;width:159px"></div>
<div class="tb" style="left:476px;width:159px"></div>
<div class="tbp" style="left:638px;width:159px"></div>
<div class="vh" style="left:1082px;top:876px;height:19px"></div>
<div style="left:1093px;top:878px;width:16px;height:16px;background:#081e66"></div>
<div class="vs" style="left:1113px;top:874px;height:24px"></div>
<div class="vh" style="left:1122px;top:876px;height:19px"></div>
<div style="left:1129px;top:874px;width:142px;height:22px;background:#fff;border:1px solid;border-color:#808080 #fff #fff #808080;box-shadow:inset 1px 1px 0 #a0a0a0"></div>
<div style="left:1271px;top:874px;width:23px;height:22px;background:linear-gradient(#f1f1f1,#dcdcdc);border:1px solid;border-color:#f8f8f8 #c2c2c2 #c2c2c2 #f8f8f8"></div>
<svg style="left:1274px;top:876px" width="18" height="18" viewBox="0 0 18 18"><circle cx="10.500" cy="7" r="4" fill="#d8ecff" stroke="#2a66b8" stroke-width="1.800"/><path d="M7.500 10L3.500 14.500" stroke="#2a66b8" stroke-width="2.400" stroke-linecap="round"/></svg>
<div style="left:1307px;top:874px;width:131px;height:22px;border:1px solid;border-color:#808080 #fff #fff #808080"></div>
<div style="left:1379px;top:878px;width:16px;height:16px;background:#000080"></div>

<svg style="left:0;top:870px" width="1440" height="30" viewBox="0 870 1440 30">
<defs>
</defs>
<!-- windows flag -->
<g transform="translate(5 877) skewY(-8)"><path d="M0 2.500q3-1.500 6 0v4.500q-3-1.500-6 0z" fill="#e0522b"/><path d="M7 2.700q3 1.500 6 0v4.500q-3 1.500-6 0z" fill="#6bb43a"/><path d="M0 8q3-1.500 6 0v4.500q-3-1.500-6 0z" fill="#3a78d6"/><path d="M7 8.200q3 1.500 6 0v4.500q-3 1.500-6 0z" fill="#f2c021"/></g>
<!-- IE -->
<g><circle cx="78.500" cy="886" r="6.300" fill="none" stroke="#2b8ae0" stroke-width="3"/><path d="M74 886h10" stroke="#2b8ae0" stroke-width="2.400"/><rect x="80" y="887" width="6" height="3" fill="#d6d5ce"/><path d="M71 892q-1-6 7-11t8-2" fill="none" stroke="#f0b323" stroke-width="1.600"/></g>
<g transform="translate(92 877)"><rect x="1.500" y="2.500" width="13" height="11" rx="2" fill="#3d8be6" stroke="#1a55b4" stroke-width="1"/><rect x="3.500" y="4.500" width="9" height="7" fill="#dbeeff"/><path d="M5 10.500l5-5.500 1.500 1.500-5 5.500-2 .500z" fill="#fff" stroke="#2b4f8f" stroke-width=".700"/><path d="M1 13.500h14v2H1z" fill="#1a55b4"/><circle cx="13.500" cy="4" r="1.200" fill="#d43a1a"/></g>
<!-- show desktop / outlook-like -->
<g><rect x="116.500" y="878.500" width="11" height="12" rx="2" fill="#f9e6d2" stroke="#e59b57" stroke-width="1.200"/><circle cx="125" cy="887.500" r="5.500" fill="#f7cf7c" stroke="#f1e2b4" stroke-width="1"/><path d="M122 886.500l3 3 3-3" fill="none" stroke="#a86a12" stroke-width="1.500"/></g>
<g transform="translate(152 877)"><rect x="1.500" y="2.500" width="13" height="11" rx="2" fill="#3d8be6" stroke="#1a55b4" stroke-width="1"/><rect x="3.500" y="4.500" width="9" height="7" fill="#dbeeff"/><path d="M5 10.500l5-5.500 1.500 1.500-5 5.500-2 .500z" fill="#fff" stroke="#2b4f8f" stroke-width=".700"/><path d="M1 13.500h14v2H1z" fill="#1a55b4"/><circle cx="13.500" cy="4" r="1.200" fill="#d43a1a"/></g>
<!-- folder -->
<g><path d="M316.500 880.500q0-2 2-2h4l1.500 1.500h5q1.500 0 1.500 1.500v8q0 1.500-1.500 1.500h-11q-1.500 0-1.500-1.500z" fill="#f5cf5f" stroke="#c79a23" stroke-width="1"/><path d="M317 883.500h13" stroke="#fbe8a4" stroke-width="1.500"/></g>
<g transform="translate(479 876)"><path d="M3.500 2.500h8l3 3v11h-11z" fill="#eaf1fc" stroke="#7f9fd4" stroke-width="1"/><path d="M11.500 2.500v3h3" fill="#cfdcf2" stroke="#7f9fd4" stroke-width=".800"/><rect x=".500" y="1" width="9" height="8" rx="1" fill="#2d5fc4" stroke="#1b3f93" stroke-width=".700"/><text x="1.300" y="7.800" font-family="Liberation Serif" font-weight="bold" font-size="8" fill="#fff">W</text><path d="M5 11.500h8M5 13.500h8" stroke="#a9bfe4" stroke-width="1"/></g>
<g transform="translate(642 877)"><path d="M3.500 2.500h8l3 3v11h-11z" fill="#eaf1fc" stroke="#7f9fd4" stroke-width="1"/><path d="M11.500 2.500v3h3" fill="#cfdcf2" stroke="#7f9fd4" stroke-width=".800"/><rect x=".500" y="1" width="9" height="8" rx="1" fill="#2d5fc4" stroke="#1b3f93" stroke-width=".700"/><text x="1.300" y="7.800" font-family="Liberation Serif" font-weight="bold" font-size="8" fill="#fff">W</text><path d="M5 11.500h8M5 13.500h8" stroke="#a9bfe4" stroke-width="1"/></g>
<!-- tray icons -->
<g><rect x="1345.500" y="881.500" width="8" height="7" fill="#9fc4f0" stroke="#355f9f"/><rect x="1351.500" y="877.500" width="8" height="7" fill="#bfe0ff" stroke="#355f9f"/><path d="M1347 891h6M1353 887h6" stroke="#555" stroke-width="1"/></g>
<g><path d="M1362 877h4v16h-4z" fill="#d81e1e"/><path d="M1366 884l6-7h5l-7 8z" fill="#d81e1e"/><path d="M1367 885l7 7-1.500 1.500-7-7z" fill="#111"/><path d="M1376 889v5h-5z" fill="#111"/></g>
</svg>

<!-- text labels -->
<span class="t" style="left:499.23px;top:8px;line-height:12px;font-size:11px;color:#6c6c6c;letter-spacing:0.379px;">LB30 и A - инструкция [Режим ограниченной функциональности] -</span>
<span class="t" style="left:862.23px;top:8px;line-height:12px;font-size:11px;color:#4a7ac0;letter-spacing:0.598px;">Microsoft Word</span>
<span class="t" style="left:59.73px;top:33px;line-height:12px;font-size:11px;color:#15428b;letter-spacing:0.111px;">Главная</span>
<span class="t" style="left:129.23px;top:33px;line-height:12px;font-size:11px;color:#15428b;letter-spacing:0.275px;">Вставка</span>
<span class="t" style="left:199.23px;top:33px;line-height:12px;font-size:11px;color:#15428b;letter-spacing:0.296px;">Разметка страницы</span>
<span class="t" style="left:331.73px;top:33px;line-height:12px;font-size:11px;color:#15428b;letter-spacing:0.261px;">Ссылки</span>
<span class="t" style="left:399.23px;top:33px;line-height:12px;font-size:11px;color:#15428b;letter-spacing:0.066px;">Рассылки</span>
<span class="t" style="left:478.53px;top:33px;line-height:12px;font-size:11px;color:#15428b;letter-spacing:0.430px;">Рецензирование</span>
<span class="t" style="left:597.53px;top:33px;line-height:12px;font-size:11px;color:#15428b;letter-spacing:0.817px;">Вид</span>
<span class="t" style="left:9.53px;top:93px;line-height:12px;font-size:11px;color:#15428b;letter-spacing:0.228px;">Вставить</span>
<span class="t" style="left:81.73px;top:59px;line-height:12px;font-size:11px;color:#8c8c8c;letter-spacing:0.300px;">Вырезать</span>
<span class="t" style="left:81.73px;top:81px;line-height:12px;font-size:11px;color:#8c8c8c;letter-spacing:0.623px;">Копировать</span>
<span class="t" style="left:80.53px;top:103px;line-height:12px;font-size:11px;color:#15428b;letter-spacing:0.494px;">Формат по образцу</span>
<span class="t" style="left:50.53px;top:123px;line-height:12px;font-size:11px;color:#3e6aaa;letter-spacing:0.254px;">Буфер обмена</span>
<span class="t" style="left:298.93px;top:123px;line-height:12px;font-size:11px;color:#3e6aaa;letter-spacing:0.784px;">Шрифт</span>
<span class="t" style="left:540.53px;top:123px;line-height:12px;font-size:11px;color:#3e6aaa;letter-spacing:0.670px;">Абзац</span>
<span class="t" style="left:979.83px;top:123px;line-height:12px;font-size:11px;color:#3e6aaa;letter-spacing:0.084px;">Стили</span>
<span class="t" style="left:1342.23px;top:123px;line-height:12px;font-size:11px;color:#3e6aaa;letter-spacing:0.288px;">Редактирование</span>
<span class="t" style="left:203.23px;top:67px;line-height:12px;font-size:11px;letter-spacing:0.051px;">Times New Roman</span>
<span class="t" style="left:327.93px;top:67px;line-height:12px;font-size:11px;transform:scaleX(1.0482);transform-origin:0 0;">14</span>
<span class="t" style="left:685.23px;top:96px;line-height:12px;font-size:11px;color:#000080;letter-spacing:0.181px;">¶ Заголов...</span>
<span class="t" style="left:757.23px;top:96px;line-height:12px;font-size:11px;color:#000080;letter-spacing:0.181px;">¶ Заголов...</span>
<span class="t" style="left:829.23px;top:96px;line-height:12px;font-size:11px;color:#000080;letter-spacing:0.181px;">¶ Заголов...</span>
<span class="t" style="left:901.23px;top:96px;line-height:12px;font-size:11px;color:#000080;letter-spacing:0.181px;">¶ Заголов...</span>
<span class="t" style="left:973.23px;top:96px;line-height:12px;font-size:11px;color:#000080;letter-spacing:0.181px;">¶ Заголов...</span>
<span class="t" style="left:1045.23px;top:96px;line-height:12px;font-size:11px;color:#000080;letter-spacing:0.181px;">¶ Заголов...</span>
<span class="t" style="left:1117.23px;top:96px;line-height:12px;font-size:11px;color:#000080;letter-spacing:0.181px;">¶ Заголов...</span>
<span class="t" style="left:1189.23px;top:96px;line-height:12px;font-size:11px;color:#000080;letter-spacing:0.181px;">¶ Заголов...</span>
<span class="t" style="left:1276.73px;top:93px;line-height:12px;font-size:11px;color:#15428b;letter-spacing:0.488px;">Изменить</span>
<span class="t" style="left:1284.23px;top:106px;line-height:12px;font-size:11px;color:#15428b;letter-spacing:0.147px;">стили</span>
<span class="t" style="left:1365.03px;top:59px;line-height:12px;font-size:11px;color:#15428b;letter-spacing:0.462px;">Найти</span>
<span class="t" style="left:1365.23px;top:81px;line-height:12px;font-size:11px;color:#15428b;letter-spacing:0.272px;">Заменить</span>
<span class="t" style="left:1365.23px;top:103px;line-height:12px;font-size:11px;color:#15428b;letter-spacing:0.084px;">Выделить</span>
<span class="t" style="left:7.93px;top:853px;line-height:12px;font-size:11px;color:#15428b;letter-spacing:0.157px;">Страница: 6 из 20</span>
<span class="t" style="left:119.23px;top:853px;line-height:12px;font-size:11px;color:#15428b;letter-spacing:0.056px;">Число слов: 3 607</span>
<span class="t" style="left:261.93px;top:853px;line-height:12px;font-size:11px;color:#15428b;letter-spacing:0.443px;">русский</span>
<span class="t" style="left:1264.79px;top:853px;line-height:12px;font-size:11.5px;color:#122f75;letter-spacing:-0.471px;">100%</span>
<span class="t" style="left:21.23px;top:879px;line-height:12px;font-size:11px;font-weight:bold;letter-spacing:1.055px;">Пуск</span>
<span class="t" style="left:171.23px;top:879px;line-height:12px;font-size:11px;letter-spacing:0.043px;">Рабочий стол</span>
<span class="t" style="left:334.23px;top:879px;line-height:12px;font-size:11px;letter-spacing:0.313px;">Инструкции</span>
<span class="t" style="left:497.53px;top:879px;line-height:12px;font-size:11px;letter-spacing:0.178px;">Электрические схемы -...</span>
<span class="t" style="left:661.53px;top:879px;line-height:12px;font-size:11px;font-weight:bold;letter-spacing:0.289px;">LB30 и A - инструкци...</span>
<span class="t" style="left:1093.23px;top:880px;line-height:12px;font-size:11px;color:#fff;transform:scaleX(0.9402);transform-origin:0 0;">RU</span>
<span class="t" style="left:1133.12px;top:878px;line-height:14px;font-size:12.5px;color:#8a8a8a;transform:scaleX(0.8855);transform-origin:0 0;">Search Desktop</span>
<span class="t" style="left:1311.7px;top:879px;line-height:12px;font-size:11px;font-weight:bold;">«</span>
<span class="t" style="left:1324.93px;top:879px;line-height:12px;font-size:11px;transform:scaleX(1.2114);transform-origin:0 0;">33</span>
<span class="t" style="left:1380.19px;top:880px;line-height:12px;font-size:11.5px;color:#fff;transform:scaleX(0.9665);transform-origin:0 0;">Ru</span>
<span class="t" style="left:1400.93px;top:879px;line-height:12px;font-size:11px;letter-spacing:0.577px;">17:20</span>
<span class="t" style="left:485.44px;top:187px;line-height:21px;font-size:18.67px;font-family:'Liberation Serif',serif;letter-spacing:0.033px;">Схема электрическая принципиальная</span>
<span class="t" style="left:348.52px;top:242px;line-height:17px;font-size:16px;font-family:'Liberation Serif',serif;letter-spacing:-0.088px;">СБ4/С-50.LB30, СБ4/С-100.LB30,</span>
<span class="t" style="left:348.52px;top:261px;line-height:17px;font-size:16px;font-family:'Liberation Serif',serif;letter-spacing:-0.194px;">СБ4/С-100.LB30B</span>
<span class="t" style="left:728.52px;top:224px;line-height:17px;font-size:16px;font-family:'Liberation Serif',serif;letter-spacing:-0.079px;">СБ4/С-50.LB30A, СБ4/С-100.LB30A,</span>
<span class="t" style="left:728.52px;top:242px;line-height:17px;font-size:16px;font-family:'Liberation Serif',serif;letter-spacing:-0.135px;">СБ4/С-100.LB30AB</span>
<span class="t" style="left:416.74px;top:566px;line-height:21px;font-size:18.67px;font-family:'Liberation Serif',serif;">Рисунок 4</span>
<span class="t" style="left:757.94px;top:566px;line-height:21px;font-size:18.67px;font-family:'Liberation Serif',serif;letter-spacing:-0.147px;">Рисунок 5</span>
<span class="t" style="left:692.2px;top:615px;line-height:14px;font-size:12px;color:#7f7f7f;">6</span>
<span class="t" style="left:378.84px;top:719px;line-height:21px;font-size:18.67px;font-family:'Liberation Serif',serif;font-weight:bold;letter-spacing:0.222px;">6 Указание мер безопасности</span>
<span class="t" style="left:378.19px;top:762px;line-height:21px;font-size:18.67px;font-family:'Liberation Serif',serif;letter-spacing:0.036px;">6.1 Применяемая маркировка имеет следующее значение:</span>
<span class="t" style="left:476.46px;top:827px;line-height:14px;font-size:12px;color:#4a4a4a;letter-spacing:0.511px;">– Опасно! Поражение током</span>
<span class="t" style="left:381.93px;top:340px;line-height:14px;font-size:12.5px;color:#111;transform:scaleX(0.9618);transform-origin:0 0;">PE</span>
<span class="t" style="left:547.12px;top:368px;line-height:14px;font-size:12.5px;color:#111;transform:scaleX(0.9558);transform-origin:0 0;">BP</span>
<span class="t" style="left:529.37px;top:371px;line-height:10px;font-size:9px;color:#111;-webkit-text-stroke:.3px #111;transform:scaleX(1.1060);transform-origin:0 0;">&lt;P</span>
<span class="t" style="left:458.3px;top:484px;line-height:11px;font-size:10px;color:#111;-webkit-text-stroke:.2px #111;">M</span>
<span class="t" style="left:484.32px;top:483px;line-height:14px;font-size:12.5px;color:#111;">M</span>
<span class="t" style="left:497.3px;top:518px;line-height:11px;font-size:10px;color:#111;letter-spacing:0.239px;-webkit-text-stroke:.2px #111;">ВР-телепрессостат</span>
<span class="t" style="left:497.3px;top:529px;line-height:11px;font-size:10px;color:#111;letter-spacing:0.191px;-webkit-text-stroke:.2px #111;">М-электродвигатель</span>
<span class="t" style="left:787.3px;top:321px;line-height:11px;font-size:10px;color:#111;transform:scaleX(1.1091);transform-origin:0 0;">XS</span>
<span class="t" style="left:751.3px;top:335px;line-height:11px;font-size:10px;color:#111;">A</span>
<span class="t" style="left:771.1px;top:335px;line-height:11px;font-size:10px;color:#111;">N</span>
<span class="t" style="left:787.1px;top:339px;line-height:11px;font-size:10px;color:#111;transform:scaleX(0.9593);transform-origin:0 0;">PE</span>
<span class="t" style="left:814.03px;top:352px;line-height:12px;font-size:11px;color:#111;transform:scaleX(0.9219);transform-origin:0 0;">BP</span>
<span class="t" style="left:808.3px;top:369px;line-height:11px;font-size:10px;color:#111;-webkit-text-stroke:.2px #111;transform:scaleX(0.9908);transform-origin:0 0;">&lt;P</span>
<span class="t" style="left:674.12px;top:432px;line-height:14px;font-size:12.5px;color:#111;">C</span>
<span class="t" style="left:697.05px;top:462px;line-height:15px;font-size:13.5px;color:#111;">M</span>
<span class="t" style="left:729.92px;top:463px;line-height:14px;font-size:12.5px;color:#111;transform:scaleX(0.8665);transform-origin:0 0;">L1</span>
<span class="t" style="left:804.76px;top:438px;line-height:14px;font-size:12px;color:#111;transform:scaleX(1.1039);transform-origin:0 0;">KK</span>
<span class="t" style="left:838.67px;top:441px;line-height:15px;font-size:13.33px;color:#111;letter-spacing:0.031px;">ВР-прессостат</span>
<span class="t" style="left:838.67px;top:456px;line-height:15px;font-size:13.33px;color:#111;letter-spacing:0.056px;">С-конденсатор (50 мкФ, 450 В)</span>
<span class="t" style="left:838.67px;top:471px;line-height:15px;font-size:13.33px;color:#111;letter-spacing:0.057px;">М-электродвигатель</span>
<span class="t" style="left:838.67px;top:486px;line-height:15px;font-size:13.33px;color:#111;letter-spacing:0.072px;">XS-вилка модели 82</span>
<span class="t" style="left:838.67px;top:501px;line-height:15px;font-size:13.33px;color:#111;letter-spacing:0.050px;">КК-тепловое реле</span>
<span class="t" style="left:838.67px;top:516px;line-height:15px;font-size:13.33px;color:#111;letter-spacing:-0.022px;">16А, 250VAC</span>
</div>
</body></html>
